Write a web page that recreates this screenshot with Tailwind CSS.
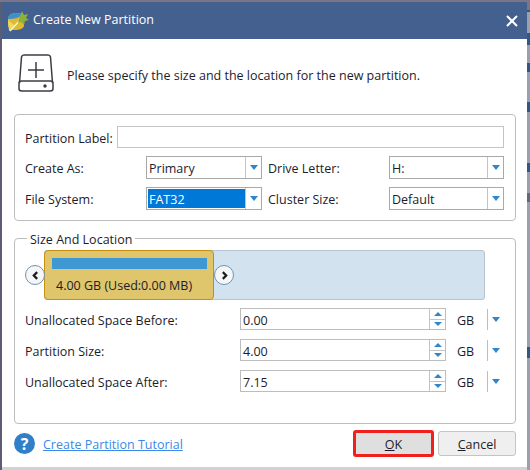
<!DOCTYPE html>
<html lang="en">
<head>
    <meta charset="UTF-8">
    <title>Create New Partition</title>
    <script src="https://cdn.jsdelivr.net/npm/@tailwindcss/browser@4"></script>
</head>
<body class="w-[530px] h-[470px] overflow-hidden bg-[#5d5c72] font-['Open_Sans',sans-serif] text-[12.5px] text-[#1c1c2c]">
  <div class="relative w-[530px] h-[470px] pt-[2px] pl-[2px]">
    <!-- what shows of the window behind -->
    <div class="absolute left-0 top-0 w-[530px] h-[2px] bg-[#7a7688]"></div>
    <div class="absolute right-0 top-0 w-[3px] h-[470px] bg-[#9aa0ae] flex flex-col">
      <div class="h-[10px] shrink-0 bg-[#7a7688]"></div>
      <div class="h-[2px] shrink-0 bg-[#2c5a88]"></div>
      <div class="h-[21px] shrink-0"></div>
      <div class="h-[12px] shrink-0 bg-[#2c5a88]"></div>
      <div class="h-[18px] shrink-0"></div>
      <div class="h-[9px] shrink-0 bg-[#2c5a88]"></div>
      <div class="h-[30px] shrink-0"></div>
      <div class="h-[10px] shrink-0 bg-[#2c5a88]"></div>
      <div class="h-[51px] shrink-0"></div>
      <div class="h-[9px] shrink-0 bg-[#2c5a88]"></div>
      <div class="h-[21px] shrink-0"></div>
      <div class="h-[9px] shrink-0 bg-[#5f6a80]"></div>
      <div class="h-[145px] shrink-0"></div>
      <div class="h-[11px] shrink-0 bg-[#2c5a88]"></div>
    </div>
    <div class="absolute left-[2px] bottom-0 w-[525px] h-[3px] bg-[#d0d2da]"></div>

    <div class="relative w-[525px] h-[465px] bg-white flex flex-col">
      <!-- title bar -->
      <div class="h-[37px] shrink-0 bg-[#44608f] flex items-center pl-[5px] pr-[9px] text-white">
        <svg class="w-[24px] h-[24px] mr-[2px]" viewBox="0 0 24 24">
          <path d="M1 10c0-4 4-6 8-6 4 0 7 1 8 4v9c-1 3-5 4-9 4-4 0-7-2-7-5z" fill="#e0b92c"/>
          <path d="M1 10c0-4 4-6 8-6 3 0 5 1 6 2-3 3-8 4-14 4z" fill="#3c8fd0"/>
          <path d="M1 11l7 6-6 5z" fill="#f0d860"/>
          <path d="M3 22L15 9" stroke="#f4f0d8" stroke-width="1.5"/>
          <path d="M15 2l2 4 4-1-2 4 3 2-4 1-1 4-3-3-3 1 1-4z" fill="#8fb13c"/>
        </svg>
        <span>Create New Partition</span>
        <svg class="ml-auto w-[12px] h-[12px]" viewBox="0 0 12 12"><path d="M1 1l10 10M11 1L1 11" stroke="#fff" stroke-width="2"/></svg>
      </div>

      <!-- header -->
      <div class="h-[75px] shrink-0 flex items-center pl-[16px]">
        <svg class="w-[36px] h-[38px] mb-[7px]" viewBox="0 0 36 38" fill="none" stroke="#3c3c46" stroke-width="1.5">
          <path d="M1.500 29L3.500 3Q4 1 6 1h24q2 0 2.500 2L34.500 29"/>
          <rect x="1" y="27" width="34" height="10" rx="2.500"/>
          <path d="M18 8v16M10 16h16"/>
          <circle cx="27" cy="32" r="1" fill="#3c3c46"/>
        </svg>
        <span class="ml-[13px] text-[#1c1c30]">Please specify the size and the location for the new partition.</span>
      </div>

      <!-- partition fields -->
      <div class="ml-[12px] mr-[11px] h-[107px] shrink-0 border border-[#bdbdbd] rounded-[4px] pt-[11px] pl-[10px] pr-[11px] flex flex-col">
        <div class="flex items-center h-[22px] shrink-0">
          <span class="w-[92px] shrink-0 pt-[4px]">Partition Label:</span>
          <div class="flex-1 h-[22px] border border-[#c4c4c4]"></div>
        </div>
        <div class="flex items-center h-[23px] shrink-0 mt-[8px]">
          <span class="w-[121px] shrink-0 pt-[4px]">Create As:</span>
          <div class="w-[116px] shrink-0 h-[23px] border border-[#a9a9a9] flex">
            <span class="flex-1 pl-[2px] leading-[23px]">Primary</span>
            <span class="w-[16px] border-l border-[#c4c4c4] flex items-center justify-center"><span class="w-0 h-0 border-x-[4px] border-x-transparent border-t-[5px] border-t-[#2f86cc]"></span></span>
          </div>
          <span class="ml-[6px] w-[121px] shrink-0 pt-[4px]">Drive Letter:</span>
          <div class="w-[115px] shrink-0 h-[23px] border border-[#a9a9a9] flex">
            <span class="flex-1 pl-[2px] leading-[23px]">H:</span>
            <span class="w-[16px] border-l border-[#c4c4c4] flex items-center justify-center"><span class="w-0 h-0 border-x-[4px] border-x-transparent border-t-[5px] border-t-[#2f86cc]"></span></span>
          </div>
        </div>
        <div class="flex items-center h-[23px] shrink-0 mt-[8px]">
          <span class="w-[121px] shrink-0 pt-[4px]">File System:</span>
          <div class="w-[116px] shrink-0 h-[23px] border border-[#a9a9a9] flex">
            <span class="flex-1 h-[19px] ml-[1px] my-[1px] pl-[1px] leading-[21px] bg-[#0078d7] text-white">FAT32</span>
            <span class="w-[16px] border-l border-[#c4c4c4] flex items-center justify-center"><span class="w-0 h-0 border-x-[4px] border-x-transparent border-t-[5px] border-t-[#2f86cc]"></span></span>
          </div>
          <span class="ml-[6px] w-[121px] shrink-0 pt-[4px]">Cluster Size:</span>
          <div class="w-[115px] shrink-0 h-[23px] border border-[#a9a9a9] flex">
            <span class="flex-1 pl-[2px] leading-[23px]">Default</span>
            <span class="w-[16px] border-l border-[#c4c4c4] flex items-center justify-center"><span class="w-0 h-0 border-x-[4px] border-x-transparent border-t-[5px] border-t-[#2f86cc]"></span></span>
          </div>
        </div>
      </div>

      <!-- size and location -->
      <div class="relative ml-[12px] mr-[11px] mt-[17px] h-[186px] shrink-0 border border-[#bdbdbd] rounded-[4px] pl-[29px] pr-[30px] pt-[11px]">
        <span class="absolute left-[12px] top-[-9px] h-[16px] bg-white px-[3px] leading-[20px]">Size And Location</span>
        <div class="h-[50px] bg-[#d2e3ef] border border-[#b4c4d0] rounded-[3px] relative">
          <div class="absolute left-[-1px] top-[-1px] w-[170px] h-[50px] bg-[#dfc56b] border border-[#c78f12] rounded-[4px] pt-[7px] pl-[7px] pr-[6px]">
            <div class="h-[11px] bg-[#3e98d4]"></div>
            <div class="mt-[8px] ml-[4px]">4.00 GB (Used:0.00 MB)</div>
          </div>
          <button class="absolute left-[-20px] top-[14px] w-[20px] h-[20px] rounded-full bg-[#f4f6f8] border border-[#6e93b5] flex items-center justify-center">
            <svg class="w-[9px] h-[9px]" viewBox="0 0 8 8"><path d="M5.500 1L2.500 4l3 3" fill="none" stroke="#1c1c1c" stroke-width="2"/></svg>
          </button>
          <button class="absolute left-[169px] top-[14px] w-[20px] h-[20px] rounded-full bg-[#f4f6f8] border border-[#6e93b5] flex items-center justify-center">
            <svg class="w-[9px] h-[9px]" viewBox="0 0 8 8"><path d="M2.500 1L5.500 4l-3 3" fill="none" stroke="#1c1c1c" stroke-width="2"/></svg>
          </button>
        </div>

        <div class="mt-[8px] ml-[-19px] flex items-center h-[22px]">
          <span class="w-[215px] shrink-0 pt-[4px]">Unallocated Space Before:</span>
          <div class="w-[206px] shrink-0 h-[22px] border border-[#bdbdbd] flex">
            <span class="flex-1 pl-[2px] leading-[23px]">0.00</span>
            <div class="w-[16px] border-l border-[#c4c4c4] flex flex-col">
              <span class="flex-1 flex items-center justify-center border-b border-[#c4c4c4]"><span class="w-0 h-0 border-x-[4px] border-x-transparent border-b-[4px] border-b-[#2f86cc]"></span></span>
              <span class="flex-1 flex items-center justify-center"><span class="w-0 h-0 border-x-[4px] border-x-transparent border-t-[4px] border-t-[#2f86cc]"></span></span>
            </div>
          </div>
          <span class="ml-[11px] w-[30px] shrink-0 pt-[5px]">GB</span>
          <span class="w-px h-[21px] shrink-0 bg-[#bdbdbd]"></span>
          <span class="ml-[4px] w-0 h-0 shrink-0 border-x-[4px] border-x-transparent border-t-[5px] border-t-[#2f86cc]"></span>
        </div>
        <div class="mt-[9px] ml-[-19px] flex items-center h-[22px]">
          <span class="w-[215px] shrink-0 pt-[4px]">Partition Size:</span>
          <div class="w-[206px] shrink-0 h-[22px] border border-[#bdbdbd] flex">
            <span class="flex-1 pl-[2px] leading-[23px]">4.00</span>
            <div class="w-[16px] border-l border-[#c4c4c4] flex flex-col">
              <span class="flex-1 flex items-center justify-center border-b border-[#c4c4c4]"><span class="w-0 h-0 border-x-[4px] border-x-transparent border-b-[4px] border-b-[#2f86cc]"></span></span>
              <span class="flex-1 flex items-center justify-center"><span class="w-0 h-0 border-x-[4px] border-x-transparent border-t-[4px] border-t-[#2f86cc]"></span></span>
            </div>
          </div>
          <span class="ml-[11px] w-[30px] shrink-0 pt-[5px]">GB</span>
          <span class="w-px h-[21px] shrink-0 bg-[#bdbdbd]"></span>
          <span class="ml-[4px] w-0 h-0 shrink-0 border-x-[4px] border-x-transparent border-t-[5px] border-t-[#2f86cc]"></span>
        </div>
        <div class="mt-[9px] ml-[-19px] flex items-center h-[22px]">
          <span class="w-[215px] shrink-0 pt-[4px]">Unallocated Space After:</span>
          <div class="w-[206px] shrink-0 h-[22px] border border-[#bdbdbd] flex">
            <span class="flex-1 pl-[2px] leading-[23px]">7.15</span>
            <div class="w-[16px] border-l border-[#c4c4c4] flex flex-col">
              <span class="flex-1 flex items-center justify-center border-b border-[#c4c4c4]"><span class="w-0 h-0 border-x-[4px] border-x-transparent border-b-[4px] border-b-[#2f86cc]"></span></span>
              <span class="flex-1 flex items-center justify-center"><span class="w-0 h-0 border-x-[4px] border-x-transparent border-t-[4px] border-t-[#2f86cc]"></span></span>
            </div>
          </div>
          <span class="ml-[11px] w-[30px] shrink-0 pt-[5px]">GB</span>
          <span class="w-px h-[21px] shrink-0 bg-[#bdbdbd]"></span>
          <span class="ml-[4px] w-0 h-0 shrink-0 border-x-[4px] border-x-transparent border-t-[5px] border-t-[#2f86cc]"></span>
        </div>
      </div>

      <!-- footer -->
      <div class="mt-[6px] flex items-center pl-[12px] pr-[11px]">
        <span class="w-[21px] h-[21px] rounded-full bg-[#2f80c8] text-white flex items-center justify-center font-bold text-[16px]">?</span>
        <a href="#" class="ml-[8px] text-[#3b8ae8] underline pt-[4px]">Create Partition Tutorial</a>
        <button class="ml-auto w-[81px] h-[27px] bg-[#dfdfdf] border-[3px] border-[#f0201c] rounded-[3px] pt-[3px]"><span class="underline">O</span>K</button>
        <button class="ml-[4px] w-[78px] h-[25px] bg-[#efefef] border border-[#c4c4c4] rounded-[3px] pt-[3px]"><span class="underline">C</span>ancel</button>
      </div>
    </div>
  </div>
</body>
</html>
